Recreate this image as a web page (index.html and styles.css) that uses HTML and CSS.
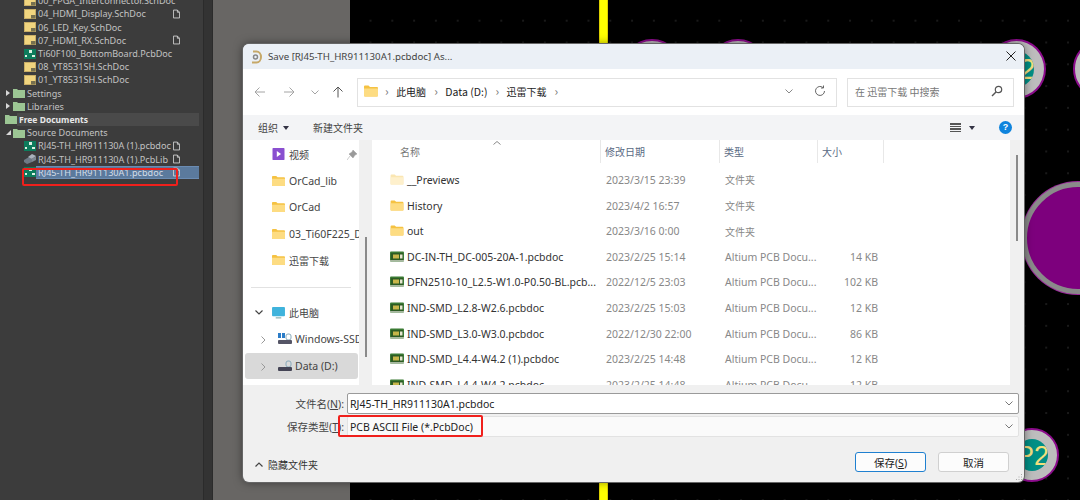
FILE: index.html
```html
<!DOCTYPE html>
<html lang="zh">
<head>
<meta charset="utf-8">
<title>Save As</title>
<link rel="stylesheet" href="styles.css">
</head>
<body>
<svg width="0" height="0" class="defs">
  <symbol id="sch" viewBox="0 0 12 10"><rect x="0.5" y="0.5" width="11" height="9" fill="#f1d57f" stroke="#c9ae66"/><rect x="7" y="6" width="4.5" height="3.5" fill="#77704f"/></symbol>
  <symbol id="pcb" viewBox="0 0 12 10"><rect width="12" height="10" fill="#0d7c5c"/><rect x="5" y="1" width="3" height="3" fill="#dff1e4"/><rect x="1" y="6" width="2" height="2" fill="#dff1e4"/><rect x="8" y="6" width="3" height="2" fill="#dff1e4"/></symbol>
  <symbol id="lib" viewBox="0 0 12 10"><path d="M0 6l5-3 3 2v3l-5 2-3-2z" fill="#6f7a86"/><path d="M4 3l4-3 4 2-4 3z" fill="#a9b2bc"/><path d="M8 5l4-3v4l-4 2z" fill="#7f8994"/></symbol>
  <symbol id="greenf" viewBox="0 0 12 10"><path d="M0 1h4l1 1h7v8H0z" fill="#9cc694"/></symbol>
  <symbol id="doc" viewBox="0 0 8 10"><path d="M.5.5H5L7.500 3v6.500h-7z M5 .5V3h2.500" fill="none" stroke="#d2d2d2"/></symbol>
  <symbol id="fold" viewBox="0 0 14 12"><path d="M0 1.500Q0 .5 1 .5h3.500l1.500 1.500h7q1 0 1 1v7.500q0 1-1 1H1q-1 0-1-1z" fill="#f5c242"/><path d="M0 3.500h14v7q0 1-1 1H1q-1 0-1-1z" fill="#fddc82"/></symbol>
  <symbol id="file" viewBox="0 0 14 10"><rect width="14" height="10" rx="1" fill="#3a7a33"/><rect x="1" y="1.500" width="12" height="7" fill="#2d5b24"/><rect x="3" y="3" width="6" height="4" fill="#c7b64a"/><rect x="10" y="3" width="2.500" height="4" fill="#e6e6d0"/><rect y="8.500" width="14" height="1.500" fill="#a8b8a0"/></symbol>
</svg>
<div class="app">
  <aside class="tree">
    <ul class="nodes">
      <li class="node lvl2"><svg class="ic"><use href="#sch"/></svg><span class="nm">00_FPGA_Interconnector.SchDoc</span></li>
      <li class="node lvl2"><svg class="ic"><use href="#sch"/></svg><span class="nm">04_HDMI_Display.SchDoc</span><svg class="dc"><use href="#doc"/></svg></li>
      <li class="node lvl2"><svg class="ic"><use href="#sch"/></svg><span class="nm">06_LED_Key.SchDoc</span></li>
      <li class="node lvl2"><svg class="ic"><use href="#sch"/></svg><span class="nm">07_HDMI_RX.SchDoc</span><svg class="dc"><use href="#doc"/></svg></li>
      <li class="node lvl2"><svg class="ic"><use href="#pcb"/></svg><span class="nm">Ti60F100_BottomBoard.PcbDoc</span></li>
      <li class="node lvl2"><svg class="ic"><use href="#sch"/></svg><span class="nm">08_YT8531SH.SchDoc</span></li>
      <li class="node lvl2"><svg class="ic"><use href="#sch"/></svg><span class="nm">01_YT8531SH.SchDoc</span></li>
      <li class="node lvl1"><i class="caret"></i><svg class="ic"><use href="#greenf"/></svg><span class="nm">Settings</span></li>
      <li class="node lvl1"><i class="caret"></i><svg class="ic"><use href="#greenf"/></svg><span class="nm">Libraries</span></li>
      <li class="node lvl0 section"><svg class="ic"><use href="#greenf"/></svg><span class="nm">Free Documents</span></li>
      <li class="node lvl1"><i class="caret open"></i><svg class="ic"><use href="#greenf"/></svg><span class="nm">Source Documents</span></li>
      <li class="node lvl2"><svg class="ic"><use href="#pcb"/></svg><span class="nm fix">RJ45-TH_HR911130A (1).pcbdoc</span><svg class="dc"><use href="#doc"/></svg></li>
      <li class="node lvl2"><svg class="ic"><use href="#lib"/></svg><span class="nm fix">RJ45-TH_HR911130A (1).PcbLib</span><svg class="dc"><use href="#doc"/></svg></li>
      <li class="node lvl2 selected"><svg class="ic"><use href="#pcb"/></svg><span class="nm">RJ45-TH_HR911130A1.pcbdoc</span><svg class="dc"><use href="#doc"/></svg></li>
    </ul>
    <div class="redbox tree-mark"></div>
  </aside>
  <div class="gutter"></div>
  <div class="sidegray"></div>
  <main class="canvas">
    <div class="trace"></div>
    <div class="pad p1"></div>
    <div class="pad p2"></div>
    <div class="pad p3"><b>P2</b></div>
    <div class="pad p4"></div>
    <div class="pad big"></div>
    <div class="pad p5"><b>P2</b></div>
  </main>

  <section class="dialog">
    <header class="titlebar">
      <svg class="app-ic" viewBox="0 0 12 16"><path d="M3 2.500h3.500a4.500 5.500 0 0 1 0 11H2" fill="none" stroke="#c6a868" stroke-width="2"/><circle cx="5.500" cy="8" r="2" fill="none" stroke="#888" stroke-width="1.500"/></svg>
      <span class="title">Save [RJ45-TH_HR911130A1.pcbdoc] As...</span>
      <svg class="close" viewBox="0 0 10 10"><path d="M.5.500l9 9M9.500.500l-9 9" stroke="#222" fill="none"/></svg>
    </header>
    <div class="navbar">
      <div class="navbtns">
        <svg class="nb" viewBox="0 0 12 12"><path d="M11 6H1M5.500 1.500L1 6l4.500 4.500" fill="none" stroke="#a4a4a4"/></svg>
        <svg class="nb" viewBox="0 0 12 12"><path d="M1 6h10M6.500 1.500L11 6l-4.500 4.500" fill="none" stroke="#a4a4a4"/></svg>
        <svg class="nb small" viewBox="0 0 8 5"><path d="M.5.500L4 4 7.500.500" fill="none" stroke="#a4a4a4"/></svg>
        <svg class="nb" viewBox="0 0 12 12"><path d="M6 11.500V1M1.500 5.500L6 1l4.500 4.500" fill="none" stroke="#555"/></svg>
      </div>
      <div class="address">
        <svg class="crumb-f"><use href="#fold"/></svg>
        <span class="sep">›</span><span class="cn">此电脑</span>
        <span class="sep">›</span><span>Data (D:)</span>
        <span class="sep">›</span><span class="cn">迅雷下载</span>
        <span class="sep">›</span>
        <svg class="addr-chev" viewBox="0 0 8 5"><path d="M.5.500L4 4 7.500.500" fill="none" stroke="#888"/></svg>
        <svg class="refresh" viewBox="0 0 12 12"><path d="M10.500 6a4.500 4.500 0 1 1-1.500-3.400M9.500 .5V3H7" fill="none" stroke="#666"/></svg>
      </div>
      <div class="search"><span class="cn">在 迅雷下载 中搜索</span><svg class="mag" viewBox="0 0 12 12"><circle cx="7.500" cy="4.500" r="3.200" fill="none" stroke="#555" stroke-width="1.200"/><path d="M5 7l-4 4" stroke="#555" stroke-width="1.500"/></svg></div>
    </div>
    <div class="toolbar">
      <span class="tool cn">组织<i class="dn"></i></span>
      <span class="tool newf cn">新建文件夹</span>
      <span class="tspace"></span>
      <span class="lines"><i></i><i></i><i></i><i></i></span><i class="dn dk"></i>
      <span class="help">?</span>
    </div>
    <div class="body">
      <nav class="sidebar">
        <div class="s-item"><svg class="s-ic" viewBox="0 0 14 14"><rect width="14" height="14" rx="1" fill="#8a4fd0"/><path d="M5 3.500l5 3.500-5 3.500z" fill="#fff"/></svg><span class="cn">视频</span><svg class="pin" viewBox="0 0 10 10"><path d="M6 0l4 4-2 1-2 3-4-4 3-2zM3 6L0 10" fill="#9a9a9a" stroke="#9a9a9a" stroke-width=".5"/></svg></div>
        <div class="s-item"><svg class="s-ic"><use href="#fold"/></svg><span>OrCad_lib</span></div>
        <div class="s-item"><svg class="s-ic"><use href="#fold"/></svg><span>OrCad</span></div>
        <div class="s-item"><svg class="s-ic"><use href="#fold"/></svg><span>03_Ti60F225_D</span></div>
        <div class="s-item"><svg class="s-ic"><use href="#fold"/></svg><span class="cn">迅雷下载</span></div>
        <hr class="s-rule">
        <div class="s-item pc"><svg class="tw" viewBox="0 0 8 5"><path d="M.5.500L4 4 7.500.500" fill="none" stroke="#444" stroke-width="1.200"/></svg><svg class="s-ic" viewBox="0 0 14 13"><rect width="14" height="10" rx="1" fill="#3fb3dc"/><rect x="4" y="11" width="6" height="1.500" fill="#9bb"/></svg><span class="cn">此电脑</span></div>
        <div class="s-item drive"><svg class="tw" viewBox="0 0 5 8"><path d="M.5.500L4 4 .5 7.500" fill="none" stroke="#999"/></svg><svg class="d-ic" viewBox="0 0 14 12"><rect x="0" y="0" width="3" height="5" fill="#2b7cc8"/><rect x="4" y="0" width="3" height="5" fill="#2b7cc8"/><rect x="8" y="1" width="5" height="6" rx="2" fill="none" stroke="#8ab"/><rect y="7" width="14" height="4" rx="1" fill="#556"/></svg><span>Windows-SSD</span></div>
        <div class="s-item drive on"><svg class="tw" viewBox="0 0 5 8"><path d="M.5.500L4 4 .5 7.500" fill="none" stroke="#999"/></svg><svg class="d-ic" viewBox="0 0 14 12"><rect x="8" y="1" width="5" height="6" rx="2" fill="none" stroke="#8ab"/><rect y="7" width="14" height="4" rx="1" fill="#445"/></svg><span>Data (D:)</span></div>
      </nav>
      <div class="strip side-strip"><div class="thumb side-thumb"></div></div>
      <div class="files">
        <table class="grid">
          <colgroup><col class="c-name"><col class="c-date"><col class="c-type"><col class="c-size"></colgroup>
          <thead><tr><th class="th-name cn">名称</th><th class="cn">修改日期</th><th class="cn">类型</th><th class="th-size cn">大小</th></tr></thead>
          <tbody>
            <tr><td><svg class="f-ic faded"><use href="#fold"/></svg>__Previews</td><td>2023/3/15 23:39</td><td class="cn">文件夹</td><td></td></tr>
            <tr><td><svg class="f-ic"><use href="#fold"/></svg>History</td><td>2023/4/2 16:57</td><td class="cn">文件夹</td><td></td></tr>
            <tr><td><svg class="f-ic"><use href="#fold"/></svg>out</td><td>2023/3/16 0:00</td><td class="cn">文件夹</td><td></td></tr>
            <tr><td><svg class="f-ic"><use href="#file"/></svg>DC-IN-TH_DC-005-20A-1.pcbdoc</td><td>2023/2/25 15:14</td><td>Altium PCB Docu...</td><td class="sz">14 KB</td></tr>
            <tr><td><svg class="f-ic"><use href="#file"/></svg>DFN2510-10_L2.5-W1.0-P0.50-BL.pcb...</td><td>2022/12/5 23:03</td><td>Altium PCB Docu...</td><td class="sz">102 KB</td></tr>
            <tr><td><svg class="f-ic"><use href="#file"/></svg>IND-SMD_L2.8-W2.6.pcbdoc</td><td>2023/2/25 15:03</td><td>Altium PCB Docu...</td><td class="sz">12 KB</td></tr>
            <tr><td><svg class="f-ic"><use href="#file"/></svg>IND-SMD_L3.0-W3.0.pcbdoc</td><td>2022/12/30 22:00</td><td>Altium PCB Docu...</td><td class="sz">86 KB</td></tr>
            <tr><td><svg class="f-ic"><use href="#file"/></svg>IND-SMD_L4.4-W4.2 (1).pcbdoc</td><td>2023/2/25 14:48</td><td>Altium PCB Docu...</td><td class="sz">12 KB</td></tr>
            <tr><td><svg class="f-ic"><use href="#file"/></svg>IND-SMD_L4.4-W4.2.pcbdoc</td><td>2023/2/25 14:48</td><td>Altium PCB Docu...</td><td class="sz">12 KB</td></tr>
          </tbody>
        </table>
        <svg class="sort" viewBox="0 0 8 4"><path d="M.5 3.500L4 .5l3.500 3" fill="none" stroke="#888"/></svg>
      </div>
      <div class="strip file-strip"><div class="thumb file-thumb"></div></div>
    </div>
    <form class="saveform">
      <div class="frow"><label>文件名(<u>N</u>):</label><div class="combo strong"><span>RJ45-TH_HR911130A1.pcbdoc</span><svg class="cchev" viewBox="0 0 8 5"><path d="M.5.500L4 4 7.500.500" fill="none" stroke="#777"/></svg></div></div>
      <div class="frow"><label>保存类型(<u>T</u>):</label><div class="combo"><span>PCB ASCII File (*.PcbDoc)</span><svg class="cchev" viewBox="0 0 8 5"><path d="M.5.500L4 4 7.500.500" fill="none" stroke="#777"/></svg></div></div>
    </form>
    <footer class="actions">
      <span class="hide cn"><svg class="up" viewBox="0 0 8 5"><path d="M.5 4.500L4 1l3.500 3.500" fill="none" stroke="#444" stroke-width="1.200"/></svg>隐藏文件夹</span>
      <span class="tspace"></span>
      <button class="btn primary" type="button">保存(<u>S</u>)</button>
      <button class="btn" type="button">取消</button>
    </footer>
    <div class="redbox type-mark"></div>
    <svg class="grip" viewBox="0 0 8 8"><path d="M6 1h1v1H6zM3.500 3.500h1v1h-1zM6 3.500h1v1H6zM1 6h1v1H1zM3.500 6h1v1h-1zM6 6h1v1H6z" fill="#aaa"/></svg>
  </section>
</div>
</body>
</html>
```
FILE: styles.css
```css
* { box-sizing: border-box; }
html, body { margin: 0; height: 100%; overflow: hidden; }
body { font-family: "Noto Sans CJK SC", "Noto Sans", sans-serif; background: #000; }
.defs { position: absolute; }
.app { position: relative; display: flex; width: 1080px; height: 500px; overflow: hidden; }

/* project tree */
.tree { position: relative; width: 203px; flex: none; background: #3c3c3c; overflow: hidden; }
.nodes { list-style: none; margin: -5.800px 0 0; padding: 0; }
.node { display: flex; align-items: center; height: 13.200px; font: 9.100px/13px "Noto Sans", sans-serif; color: #c2c2c2; white-space: nowrap; }
.lvl0 { padding-left: 5px; }
.lvl1 { padding-left: 6px; }
.lvl2 { padding-left: 24px; }
.ic { width: 12px; height: 10px; margin-right: 2px; flex: none; }
.lvl1 .ic { margin-left: 3px; margin-right: 2px; }
.lvl0 .ic { margin-right: 2px; }
.dc { width: 7px; height: 10px; margin-left: auto; margin-right: 23px; flex: none; }
.nm { flex: none; }
.fix { width: 133px; overflow: hidden; }
.caret { width: 0; height: 0; border-left: 4px solid #d8d8d8; border-top: 3px solid transparent; border-bottom: 3px solid transparent; flex: none; }
.caret.open { border: 0; border-right: 5px solid #d8d8d8; border-top: 5px solid transparent; width: 5px; margin-right: -1px; }
.section { background: linear-gradient(#4a4a4a, #4a4a4a) no-repeat 17px 0 / 182px 100%; font-size: 8.500px; font-weight: 700; color: #e8e8e8; }
.selected { position: relative; }
.selected .nm { position: relative; width: 163px; margin: 0 -163px 0 -2px; padding-left: 2px; background: #5b7a9d; color: #d4dde8; border: solid #6b8cb3; border-width: 1px 0; line-height: 11px; }
.selected .dc { position: relative; margin-left: 137px; margin-right: 0; }
.redbox { position: absolute; border: 2px solid #f0201c; border-radius: 2px; }
.tree-mark { left: 22px; top: 168px; width: 156px; height: 18px; }

/* surrounding chrome */
.gutter { width: 10px; flex: none; background: #333; border-left: 1px solid #2b2b2b; border-right: 1px solid #2b2b2b; }
.sidegray { width: 137px; flex: none; background: #686664; }
.canvas { position: relative; flex: 1; background: #000 radial-gradient(circle, #333 0.500px, transparent 0.900px) -12.200px 9.800px / 21.800px 21.800px; }
.trace { position: absolute; left: 249px; top: 0; bottom: 0; width: 9px; background: linear-gradient(90deg, #c8b400, #ff0 15%, #ff0 85%, #c8b400); }
.pad { position: absolute; border-radius: 50%; background: #bdbdbd; border: 2px solid #8c0c8c; }
.pad b { position: absolute; inset: 10px; border-radius: 50%; background: #008f85; color: #f2df7e; font: 400 30px/36px "Liberation Sans", sans-serif; text-align: center; white-space: nowrap; overflow: hidden; }
.p1 { left: 272px; top: 39px; width: 60px; height: 60px; }
.p2 { left: 358px; top: 39px; width: 60px; height: 60px; }
.p3 { left: 637px; top: 39px; width: 59px; height: 60px; }
.p4 { left: 723px; top: 39px; width: 60px; height: 60px; }
.big { left: 672px; top: 182px; width: 112px; height: 112px; background: #7d007d; border: 5px solid #8a8a8a; box-shadow: 0 0 0 1px #9b2a9b; }
.p5 { left: 655px; top: 428px; width: 54px; height: 54px; }
.p5 b { inset: 9px; font-size: 27px; line-height: 34px; }

/* save dialog */
.dialog { position: absolute; left: 243px; top: 44px; width: 781px; height: 438px; display: flex; flex-direction: column; background: #f0f0f0; border-radius: 6px; overflow: hidden; box-shadow: 0 0 0 1px #666, 0 0 10px rgba(0,0,0,.5); font-size: 10.500px; color: #222; }
.cn { font-size: 10px; }
.titlebar { position: relative; height: 25px; display: flex; align-items: center; padding-left: 7px; background: #ebf0f6; flex: none; }
.app-ic { width: 12px; height: 16px; margin-right: 6px; }
.title { font: 9.700px "Noto Sans", sans-serif; color: #444; }
.close { position: absolute; right: 8px; top: 7px; width: 10px; height: 10px; }
.navbar { height: 46px; background: #fff; display: flex; align-items: center; flex: none; padding-right: 10px; }
.navbtns { width: 114px; display: flex; align-items: center; padding-left: 11px; gap: 17px; flex: none; }
.nb { width: 12px; height: 12px; flex: none; }
.nb.small { width: 8px; height: 5px; margin: 0 -4px 0 -1px; }
.address { width: 480px; height: 29px; flex: none; border: 1px solid #e2e2e2; display: flex; align-items: center; padding: 0 0 2px 6px; gap: 7px; color: #222; }
.crumb-f { width: 14px; height: 12px; flex: none; margin-right: -1px; }
.sep { color: #777; font-size: 12px; line-height: 12px; margin: 0 .5px 0 1px; }
.addr-chev { width: 8px; height: 5px; margin-left: auto; margin-right: 14px; }
.refresh { width: 12px; height: 12px; margin-right: 10px; }
.search { width: 167px; height: 29px; margin-left: 10px; flex: none; border: 1px solid #e2e2e2; display: flex; align-items: center; padding: 0 10px 2px 7px; color: #777; justify-content: space-between; }
.mag { width: 12px; height: 12px; }
.toolbar { height: 25px; background: #f3f4f6; display: flex; align-items: center; padding: 0 12px 0 15px; flex: none; color: #444; }
.tool { display: inline-flex; align-items: center; }
.newf { margin-left: 24px; }
.dn { display: inline-block; width: 0; height: 0; margin-left: 5px; border: 3px solid transparent; border-top: 4px solid #334; border-bottom: 0; }
.dk { margin-left: 8px; margin-right: 24px; }
.tspace { flex: 1; }
.lines { width: 11px; display: flex; flex-direction: column; gap: 1px; }
.lines i { height: 1.500px; background: #555; }
.help { width: 13px; height: 13px; border-radius: 50%; background: #0f84dd; color: #fff; font: 700 9px/13px "Liberation Sans", sans-serif; text-align: center; }
.body { display: flex; height: 245px; flex: none; background: #f0f0f0; }
.sidebar { width: 116px; background: #fff; overflow: hidden; flex: none; padding: 1px 0 0 29px; font-family: "Noto Sans", "Noto Sans CJK SC", sans-serif; color: #444; }
.s-item { position: relative; height: 26.500px; display: flex; align-items: center; white-space: nowrap; }
.s-ic { width: 13px; height: 12px; margin-right: 4px; flex: none; }
.pin { position: absolute; left: 75px; top: 9px; width: 10px; height: 10px; }
.s-rule { margin: 13px 8px 12px -21px; border: 0; border-top: 1px solid #e2e2e2; }
.pc { margin-left: -17px; }
.tw { width: 8px; height: 5px; flex: none; margin-right: 9px; }
.drive { margin-left: -27px; padding-left: 50px; }
.drive .tw { position: absolute; left: 16px; top: 10px; width: 5px; height: 8px; margin: 0; }
.d-ic { position: absolute; left: 33px; top: 7px; width: 14px; height: 12px; }
.on { background: #d9d9d9; border-radius: 3px; width: 113px; }
.strip { position: relative; flex: none; background: #f0f0f0; }
.thumb { position: absolute; width: 2px; background: #8a8a8a; }
.side-strip { width: 13px; }
.side-thumb { left: 6px; top: 97px; height: 120px; }
.file-strip { width: 14px; }
.file-thumb { left: 6px; top: 15px; height: 86px; }
.files { position: relative; width: 638px; background: #fff; overflow: hidden; flex: none; font-family: "Noto Sans", "Noto Sans CJK SC", sans-serif; }
.grid { border-collapse: collapse; table-layout: fixed; width: 512px; }
.c-name { width: 228px; } .c-date { width: 119px; } .c-type { width: 98px; } .c-size { width: 67px; }
.grid th { height: 27.200px; padding: 0 0 0 5px; font-weight: 400; text-align: left; vertical-align: top; line-height: 24px; color: #5a6a84; background: linear-gradient(#e8e8e8, #e8e8e8) no-repeat left top / 1px 23px; }
.grid th.th-name { padding-left: 28px; background: none; color: #777; }
.grid th.th-size { background: linear-gradient(#e8e8e8, #e8e8e8) no-repeat left top / 1px 23px, linear-gradient(#e8e8e8, #e8e8e8) no-repeat right top / 1px 23px; }
.grid td { height: 25.600px; padding: 0 0 0 6px; color: #888; white-space: nowrap; overflow: hidden; vertical-align: middle; }
.grid td:first-child { color: #333; padding-left: 18px; }
.grid td.sz { text-align: right; padding-right: 6px; }
.f-ic { width: 14px; height: 11px; vertical-align: -1px; margin-right: 3px; }
.faded { opacity: .4; }
.sort { position: absolute; left: 121px; top: 1px; width: 8px; height: 4px; }
.saveform { flex: none; padding: 8px 5px 0 0; display: flex; flex-direction: column; gap: 2px; font-family: "Noto Sans", "Noto Sans CJK SC", sans-serif; }
.frow { display: flex; align-items: center; }
.frow label { width: 104px; text-align: right; padding-right: 3px; color: #444; flex: none; white-space: nowrap; }
.combo { flex: 1; height: 21px; background: #fafafa; border: 1px solid #e2e2e2; border-radius: 2px; display: flex; align-items: center; justify-content: space-between; padding: 0 5px 0 2px; color: #222; }
.combo.strong { background: #fff; border-color: #9a9a9a; }
.cchev { width: 8px; height: 5px; }
.actions { flex: 1; display: flex; align-items: center; padding: 5px 15px 0 12px; gap: 12px; }
.hide { display: inline-flex; align-items: center; gap: 5px; color: #333; margin-top: 4px; }
.up { width: 8px; height: 5px; }
.btn { width: 71px; height: 20px; padding: 0; border: 1px solid #d0d0d0; border-radius: 3px; background: #fcfcfc; font: 10.500px "Noto Sans", "Noto Sans CJK SC", sans-serif; color: #222; }
.primary { border-color: #1f80d0; }
.type-mark { left: 95px; top: 371px; width: 145px; height: 22px; }
.grip { position: absolute; right: 1px; bottom: 1px; width: 8px; height: 8px; }
```
